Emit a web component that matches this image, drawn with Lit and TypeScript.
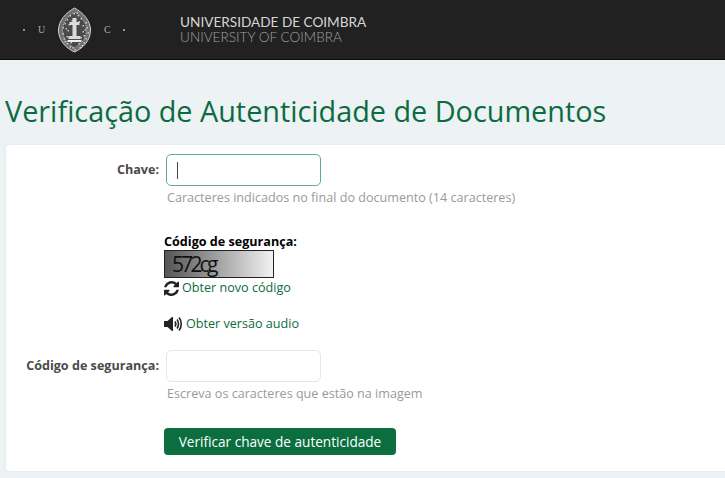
import { LitElement, html, css, svg } from "lit";
import { customElement } from "lit/decorators.js";

const speckles = [
  [12,8],[16,6],[20,8],[23,11],[9,12],[7,16],[5,20],[28,15],[29,20],[30,25],[5,26],[6,31],[28,31],[26,35],[9,36],[12,39],[22,40],[17,42],
  [11,17],[10,23],[25,18],[25,24],[12,29],[23,30],[14,13],[21,14],[9,29],[26,28],[8,21],[27,22],[13,35],[21,36],[15,40],[19,5],[24,38],[7,34]
];

@customElement("app-root")
export class AppRoot extends LitElement {
  static styles = css`
    :host { display: block; width: 725px; height: 478px; overflow: hidden; background: #edf2f5; font-family: "Open Sans", sans-serif; font-size: 12.6px; color: #4a4a4a; }
    .top { height: 60px; box-sizing: border-box; background: #212121; border-bottom: 1px solid #0c0c0c; display: flex; align-items: center; padding-left: 23px; }
    .uc { display: flex; align-items: center; font-family: "Liberation Serif", serif; color: #a9a9a9; font-size: 10px; width: 157px; flex: none; }
    .dot { width: 2px; height: 2px; background: #bbb; border-radius: 50%; }
    .u { margin-left: 13px; width: 19px; }
    .c { margin-left: 12px; margin-right: 12px; }
    .brand { font-family: "Lato", sans-serif; line-height: 15px; font-size: 13.6px; margin-top: 1px; }
    .brand div { white-space: nowrap; }
    .pt { color: #d6d6d6; }
    .en { color: #a0a0a0; font-weight: 300; }
    h1 { margin: 0; font-weight: 400; font-size: 28.8px; line-height: 37px; color: #0c6b41; padding: 32px 0 0 5px; height: 84px; box-sizing: border-box; white-space: nowrap; }
    .card { margin-left: 5px; background: #fff; border: 1px solid #e6ebee; border-right: none; border-radius: 4px 0 0 4px; height: 328px; box-sizing: border-box; padding-top: 9px; }
    .row { display: flex; align-items: flex-start; }
    .lab { width: 153px; flex: none; text-align: right; font-weight: 700; color: #4a4a4a; line-height: 32px; white-space: nowrap; }
    .field { margin-left: 7px; }
    .input { width: 155px; height: 32px; box-sizing: border-box; border: 1px solid #e4e6e8; border-radius: 5px; display: flex; align-items: center; padding-left: 10px; background: #fff; }
    .focus { border-color: #5fae8c; }
    .caret { width: 1px; height: 17px; background: #444; }
    .hint { color: #9a9a9a; margin-left: 1px; line-height: 18px; margin-top: 3px; white-space: nowrap; }
    .captcha { margin: 26px 0 0 158px; }
    .ct { font-weight: 700; color: #000; line-height: 18px; height: 17px; }
    .img { width: 110px; height: 28px; box-sizing: border-box; border: 1px solid #222; background: linear-gradient(90deg, #555, #f2f2f2); font-size: 21px; font-weight: 500; letter-spacing: -2.8px; color: #111; line-height: 26px; padding-left: 7px; }
    .lnk { display: flex; align-items: center; color: #0c6b41; line-height: 18px; white-space: nowrap; }
    .l1 { margin-top: 1px; gap: 3px; height: 18px; }
    .l2 { margin-top: 18px; gap: 3px; height: 18px; }
    .r2 { margin-top: 17px; }
    .btn { margin: 25px 0 0 158px; width: 232px; height: 27px; background: #0a6e3f; color: #fff; font-size: 13.6px; border-radius: 4px; display: flex; align-items: center; justify-content: center; white-space: nowrap; }
    svg { display: block; flex: none; }
  `;

  seal() {
    return html`<svg width="35" height="46" viewBox="0 0 34 46">
      <path d="M17 1C26 6 33 14 33 23C33 33 26 41 17 45C8 41 1 33 1 23C1 14 8 6 17 1Z" fill="#6e6e6e" stroke="#d4d4d4" stroke-width="1"/>
      <path d="M17 5C24 9 29 16 29 23C29 31 24 37 17 41C10 37 5 31 5 23C5 16 10 9 17 5Z" fill="#4a4a4a" stroke="#b0b0b0" stroke-dasharray="1.5 1"/>
      ${speckles.map(([x, y]) => svg`<rect x=${x} y=${y} width="1.5" height="1.5" fill="#c8c8c8"/>`)}
      <path d="M15 11h4v4h3v3h-3v11h4v3h-12v-3h4v-11h-3v-3h3z" fill="#dcdcdc"/>
      <path d="M10 34h14" stroke="#efefef" stroke-width="2"/>
    </svg>`;
  }

  render() {
    return html`
      <div class="top">
        <div class="uc">
          <span class="dot"></span><span class="u">U</span>
          ${this.seal()}
          <span class="c">C</span><span class="dot"></span>
        </div>
        <div class="brand">
          <div class="pt">UNIVERSIDADE DE COIMBRA</div>
          <div class="en">UNIVERSITY OF COIMBRA</div>
        </div>
      </div>
      <h1>Verificação de Autenticidade de Documentos</h1>
      <div class="card">
        <div class="row">
          <div class="lab">Chave:</div>
          <div class="field">
            <div class="input focus"><span class="caret"></span></div>
            <div class="hint">Caracteres indicados no final do documento (14 caracteres)</div>
          </div>
        </div>
        <div class="captcha">
          <div class="ct">Código de segurança:</div>
          <div class="img">572cg</div>
          <div class="lnk l1">
            <svg width="15" height="15" viewBox="0 0 1536 1536" fill="#222"><path d="M1511 928q0 5-1 7-64 268-268 434.500T764 1536q-146 0-282.500-55T238 1324l-129 129q-19 19-45 19t-45-19-19-45V960q0-26 19-45t45-19h448q26 0 45 19t19 45-19 45L420 1142q71 66 161 102t187 36q134 0 250-65t186-179q11-17 53-117 8-23 30-23h192q13 0 22.500 9.500t9.500 22.500zM1536 128v448q0 26-19 45t-45 19h-448q-26 0-45-19t-19-45 19-45l138-138q-148-137-349-137-134 0-250 65T332 500q-11 17-53 117-8 23-30 23H50q-13 0-22.500-9.500T18 608v-7q65-268 270-434.500T768 0q146 0 284 55.500T1297 212l130-129q19-19 45-19t45 19 19 45z"/></svg>
            Obter novo código
          </div>
          <div class="lnk l2">
            <svg width="19" height="16" viewBox="0 0 19 16"><path d="M0 5h3.500L8 1h1v14H8L3.500 11H0z" fill="#222"/><g fill="none" stroke="#222" stroke-width="1.600"><path d="M11 5.500c1 1.500 1 3.500 0 5"/><path d="M13 3.500c2 2.500 2 6.500 0 9"/><path d="M15 1.500c3 3.500 3 9.500 0 13"/></g></svg>
            Obter versão audio
          </div>
        </div>
        <div class="row r2">
          <div class="lab">Código de segurança:</div>
          <div class="field">
            <div class="input"></div>
            <div class="hint">Escreva os caracteres que estão na imagem</div>
          </div>
        </div>
        <div class="btn">Verificar chave de autenticidade</div>
      </div>
    `;
  }
}
